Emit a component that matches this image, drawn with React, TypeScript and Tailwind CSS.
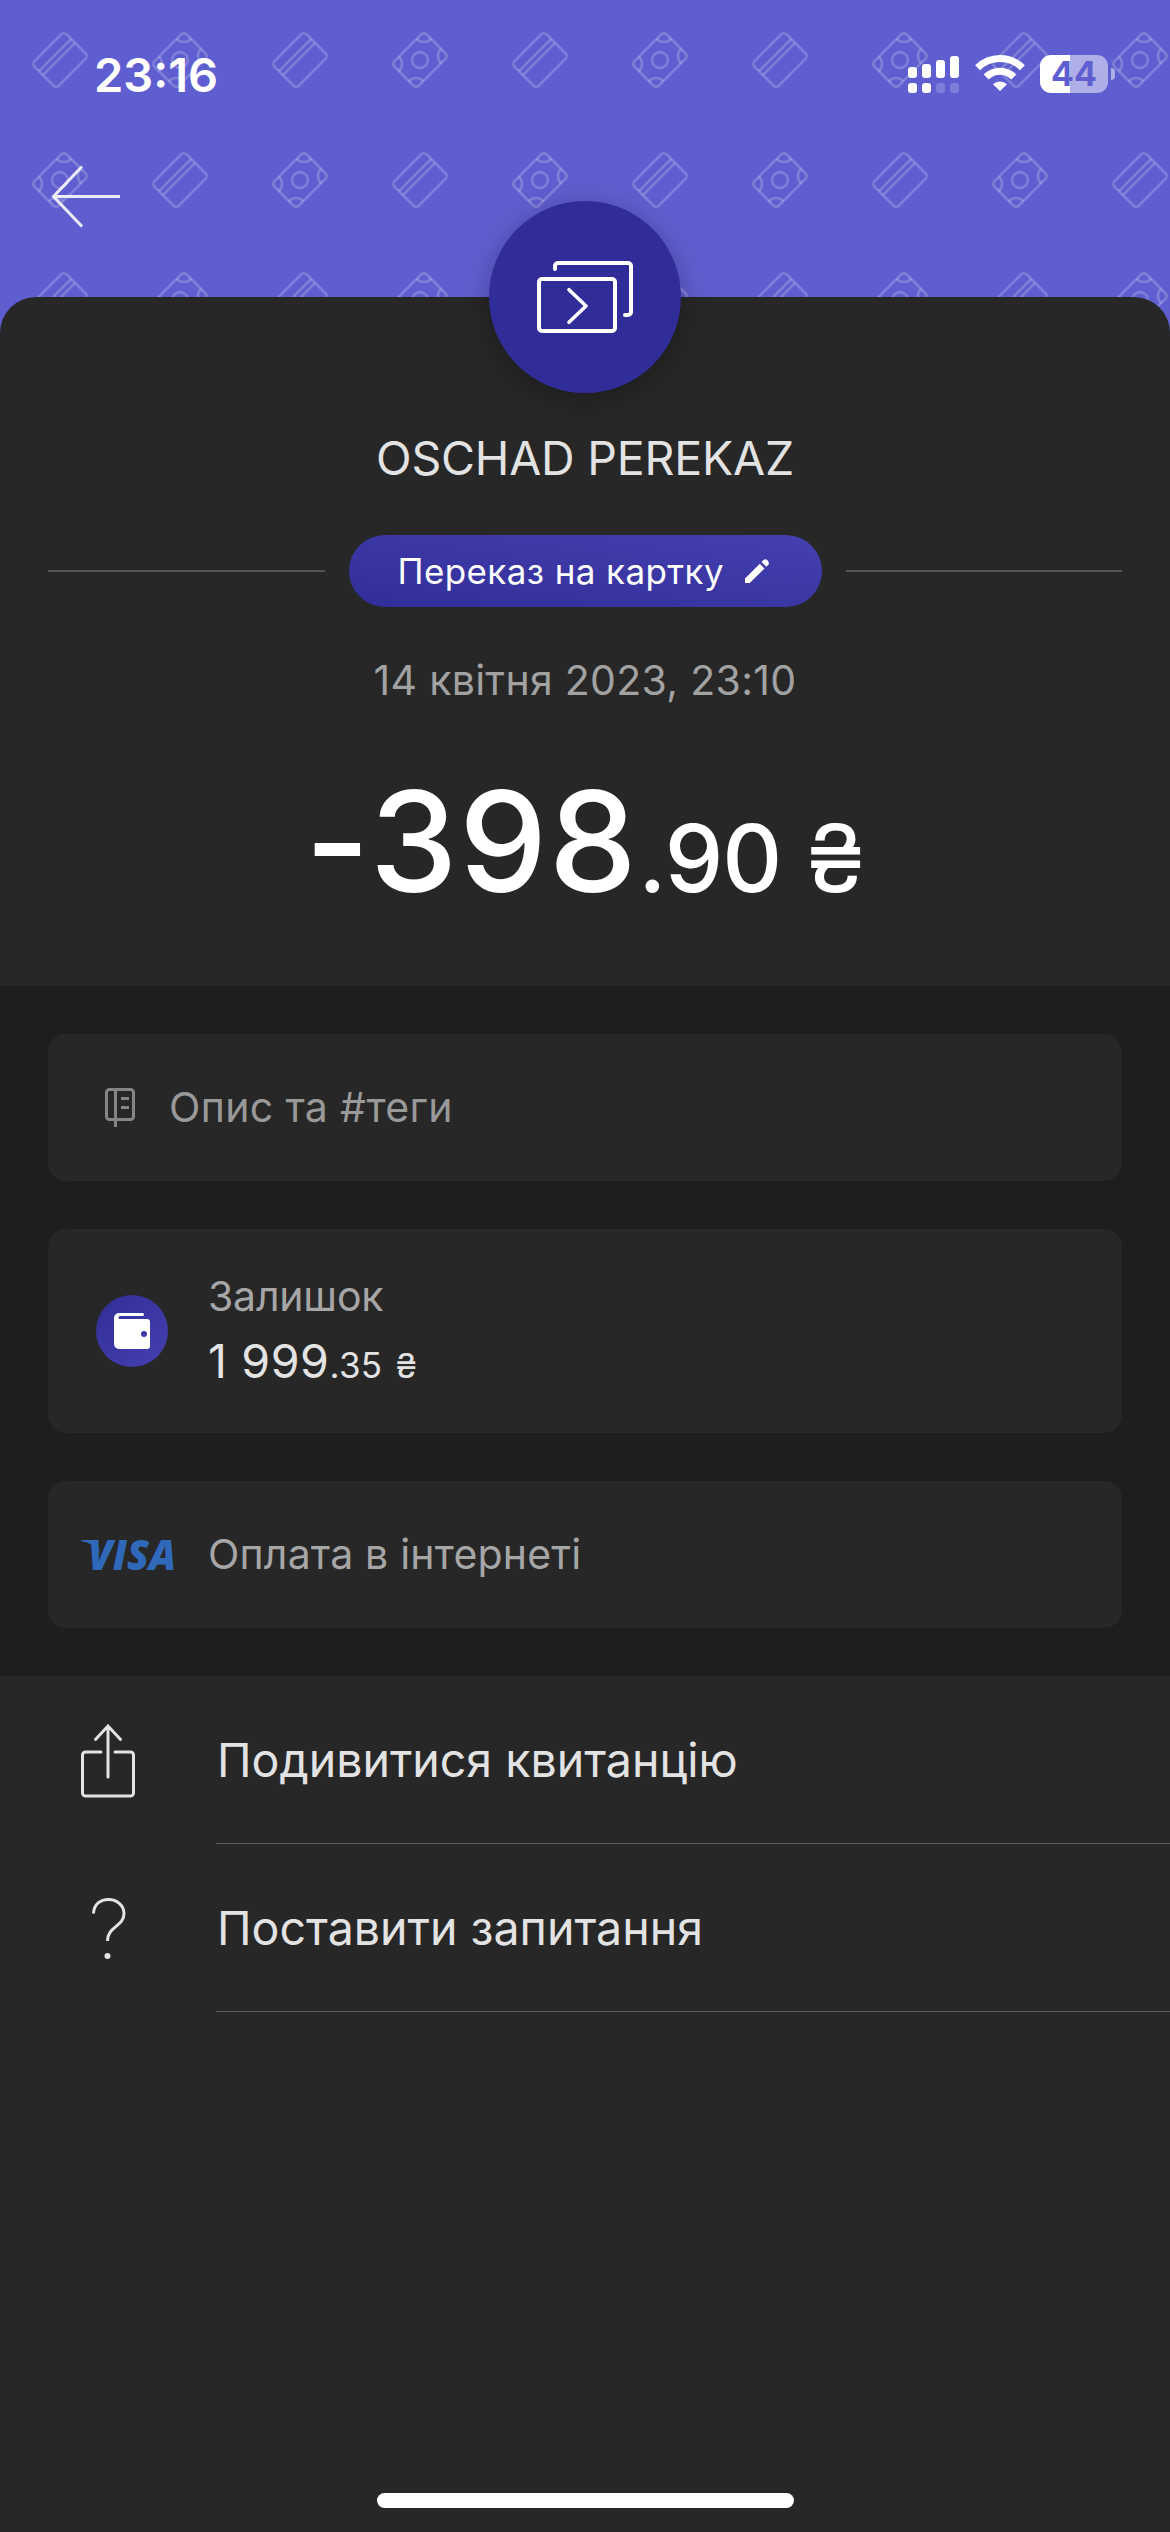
import React from 'react';

interface CardProps {
  className: string;
  children: React.ReactNode;
}

interface ActionRowProps {
  icon: React.ReactNode;
  label: string;
}

// Repeating banknote / bank card wallpaper behind the header
function HeaderPattern() {
  return (
    <svg className="absolute inset-0" width="1170" height="340" fill="none" stroke="white" strokeOpacity="0.2" strokeWidth="2.6">
      <defs>
        <g id="card">
          <g transform="rotate(-45)">
            <rect x="-22.75" y="-17.25" width="45.5" height="34.5" rx="4" />
            <path d="M-22.75 -7H22.75M-22.75 -1.4H22.75" />
          </g>
        </g>
        <g id="cash">
          <g transform="rotate(-45)">
            <rect x="-22.75" y="-17.25" width="45.5" height="34.5" rx="4" />
            <path d="M-12.5 -17.25A10 10 0 0 1 -22.75 -7M12.5 -17.25A10 10 0 0 0 22.75 -7M-12.5 17.25A10 10 0 0 0 -22.75 7M12.5 17.25A10 10 0 0 1 22.75 7" />
            <circle r="7.9" />
          </g>
        </g>
      </defs>
      {[0, 1, 2].map(row =>
        Array.from({ length: 10 }, (_, col) => (
          <use
            key={`${row}-${col}`}
            href={(row + col) % 2 === 0 ? '#card' : '#cash'}
            x={60 + col * 120}
            y={60 + row * 120}
          />
        ))
      )}
    </svg>
  );
}

function SignalIcon() {
  return (
    <svg width="52" height="38" viewBox="0 0 52 38" fill="white">
      <rect x="0" y="12" width="9" height="11" rx="3" />
      <rect x="14" y="9" width="9" height="14" rx="3" />
      <rect x="28" y="5" width="9" height="18" rx="3" />
      <rect x="42" y="1" width="9" height="22" rx="3" />
      <rect x="0" y="28" width="9" height="10" rx="3" />
      <rect x="14" y="28" width="9" height="10" rx="3" />
      <rect x="28" y="28" width="9" height="10" rx="3" opacity="0.2" />
      <rect x="42" y="28" width="9" height="10" rx="3" opacity="0.2" />
    </svg>
  );
}

function WifiIcon() {
  return (
    <svg width="50" height="38" viewBox="0 0 50 38" fill="none" stroke="white" strokeWidth="7">
      <path d="M2.6 12.8A31.8 31.8 0 0 1 47.4 12.8" />
      <path d="M11.2 22A19.6 19.6 0 0 1 38.8 22" />
      <path d="M25 36L18 29.2A10.5 10.5 0 0 1 32 29.2Z" fill="white" stroke="none" />
    </svg>
  );
}

function Battery() {
  return (
    <div className="flex items-center gap-[3px]">
      <div className="flex h-[38px] w-[68px] items-center justify-center rounded-[11px] bg-linear-to-r from-white from-44% to-white/50 to-44%">
        <span className="text-[34px] font-bold leading-none text-[#5f5ed0]">44</span>
      </div>
      <div className="h-3 w-1 rounded-r-full bg-white/50" />
    </div>
  );
}

function StatusBar() {
  return (
    <div className="relative flex h-[148px] items-center justify-between pl-[94px] pr-[55px]">
      <span className="text-[47px] font-semibold leading-none">23:16</span>
      <div className="flex items-center gap-[15px]">
        <SignalIcon />
        <WifiIcon />
        <Battery />
      </div>
    </div>
  );
}

function TransferIcon() {
  return (
    <svg width="96" height="72" viewBox="0 0 96 72" fill="none" stroke="white" strokeWidth="4" strokeLinecap="round" strokeLinejoin="round">
      <rect x="2" y="18" width="76" height="52" rx="3" />
      <path d="M18 8V5a3 3 0 0 1 3-3H91a3 3 0 0 1 3 3V51a3 3 0 0 1-3 3H88" />
      <path d="M32 28.7L49 45L32 61.3" strokeWidth="3.6" />
    </svg>
  );
}

function Card({ className, children }: CardProps) {
  return (
    <div className={`flex w-full rounded-[18px] bg-[#272727] ${className}`}>
      {children}
    </div>
  );
}

function ActionRow({ icon, label }: ActionRowProps) {
  return (
    <div className="flex h-[168px] items-center">
      <div className="flex w-[216px] shrink-0 items-center justify-center pt-px">{icon}</div>
      <div className="flex h-full flex-1 items-center border-b border-[#5a5a5a] pl-px pt-0.5 text-[46.5px] text-[#e3e3e3]">
        {label}
      </div>
    </div>
  );
}

export default function App() {
  return (
    <div className="flex h-[2532px] w-[1170px] flex-col overflow-hidden bg-[#272727] font-['Inter','Liberation_Sans',sans-serif] text-white">

      {/* Header */}
      <div className="relative h-[340px] shrink-0 bg-[#5f5ed0]">
        <HeaderPattern />
        <StatusBar />
        <svg className="relative ml-[51px] mt-[17px]" width="70" height="63" viewBox="0 0 70 63" fill="none" stroke="white" strokeOpacity="0.88" strokeWidth="3">
          <path d="M69 31.5H2M31 1.5L2.5 31.5L31 61.5" />
        </svg>
      </div>

      {/* Transaction summary */}
      <div className="relative -mt-[43px] flex h-[689px] shrink-0 flex-col items-center rounded-t-[36px] bg-[#272727] pt-[131px]">
        <div className="absolute -top-24 flex size-48 items-center justify-center rounded-full bg-[#312d98] shadow-[0_6px_28px_rgba(0,0,0,0.28)]">
          <TransferIcon />
        </div>
        <h1 className="text-[46.5px] leading-[60px] tracking-[-0.2px] text-[#e3e3e3]">OSCHAD PEREKAZ</h1>
        <div className="mt-[47px] flex w-full items-center gap-6 px-12">
          <div className="h-0.5 flex-1 bg-[#535353]" />
          <div className="flex h-[72px] w-[473px] items-center gap-[21px] rounded-full bg-linear-to-tr from-[#312d98] to-[#4540b0] pl-[49px]">
            <span className="whitespace-nowrap text-[35px] leading-9 tracking-[0.4px]">Переказ на картку</span>
            <svg width="24" height="24" viewBox="0 0 24 24" fill="white">
              <path d="M0 24V19.500L14.800 4.700L19.500 9.400L4.800 24ZM16.500 3L18.500 1Q20.500 -0.500 22.600 1.400Q24.600 3.500 23.600 5.500L21.300 7.800Z" />
            </svg>
          </div>
          <div className="h-0.5 flex-1 bg-[#535353]" />
        </div>
        <p className="mt-[43px] text-[41px] leading-[60px] tracking-[0.3px] text-[#a2a2a2]">14 квітня 2023, 23:10</p>
        <p className="mt-[51px] flex items-baseline font-medium leading-[160px] [font-feature-settings:'calt'_0]">
          <span className="text-[140px]">-</span>
          <span className="text-[140px] tracking-[1.5px]">398</span>
          <span className="text-[93px] tracking-[-1px]">.90</span>
          <span className="ml-[25px] text-[93px] font-normal">₴</span>
        </p>
      </div>

      {/* Details */}
      <div className="flex h-[690px] shrink-0 flex-col gap-12 bg-[#1e1e1e] p-12">
        <Card className="h-[147px] items-center pl-[57px]">
          <svg width="30" height="40" viewBox="0 0 30 40" fill="none" stroke="#858585" strokeWidth="3">
            <rect x="1.500" y="1.500" width="27" height="30" rx="3" />
            <path d="M10.500 1.500V39M16 10.500H24M16 19.500H24" />
          </svg>
          <span className="ml-[34px] text-[41px] tracking-[0.35px] text-[#999999]">Опис та #теги</span>
        </Card>
        <Card className="h-[204px] items-center gap-10 pl-12">
          <div className="flex size-[72px] items-center justify-center rounded-full bg-linear-to-br from-[#312d98] to-[#4540b0]">
            <svg width="36" height="36" viewBox="0 0 36 36" fill="white">
              <path fillRule="evenodd" d="M5 0H28.500A1.500 1.500 0 0 1 28.500 3H6A1.500 1.500 0 0 0 6 6H33A3 3 0 0 1 36 9V33A3 3 0 0 1 33 36H5A5 5 0 0 1 0 31V5A5 5 0 0 1 5 0ZM30 18A3 3 0 1 0 30 24A3 3 0 1 0 30 18Z" />
            </svg>
          </div>
          <div className="flex flex-col pt-[3px]">
            <span className="text-[41px] leading-12 tracking-[-0.2px] text-[#a6a6a6]">Залишок</span>
            <span className="mt-[13px] flex items-baseline leading-14 text-[#e3e3e3]">
              <span className="text-[46.5px] tracking-[0.6px]">1 999</span>
              <span className="text-[35px] tracking-[0.3px]">.35</span>
              <span className="ml-[13px] text-[34px]">₴</span>
            </span>
          </div>
        </Card>
        <Card className="h-[147px] items-center pl-[33px]">
          <svg className="overflow-visible" width="94" height="32" viewBox="0 0 94 32" fill="#3069ba">
            <path d="M0 1H12Q15 1 16 4L19 14Q13 4 0 2Z" />
            <text x="7" y="31" textLength="88" lengthAdjust="spacingAndGlyphs" className="font-['Open_Sans',sans-serif] text-[42px] font-extrabold italic">VISA</text>
          </svg>
          <span className="ml-[33px] text-[41px] tracking-[0.2px] text-[#a6a6a6]">Оплата в інтернеті</span>
        </Card>
      </div>

      {/* Actions */}
      <ActionRow
        label="Подивитися квитанцію"
        icon={
          <svg width="54" height="74" viewBox="0 0 54 74" fill="none" stroke="#e3e3e3" strokeWidth="3" strokeLinecap="round">
            <path d="M20 28H4.500a3 3 0 0 0-3 3V69a3 3 0 0 0 3 3H49.500a3 3 0 0 0 3-3V31a3 3 0 0 0-3-3H34" />
            <path d="M27 53V2M14.500 15.500L27 2L39.500 15.500" />
          </svg>
        }
      />
      <ActionRow
        label="Поставити запитання"
        icon={
          <svg className="ml-0.5" width="34" height="62" viewBox="0 0 34 62" fill="none" stroke="#e3e3e3" strokeWidth="3">
            <path d="M1.500 15.500C2 6 8.500 1.500 16.500 1.500S32 7 32 15.500C32 29 15.500 28 15.500 43" />
            <circle cx="15.500" cy="58" r="3" fill="#e3e3e3" stroke="none" />
          </svg>
        }
      />

      {/* Home indicator */}
      <div className="mx-auto mb-6 mt-auto h-[15px] w-[417px] rounded-full bg-white" />
    </div>
  );
}
